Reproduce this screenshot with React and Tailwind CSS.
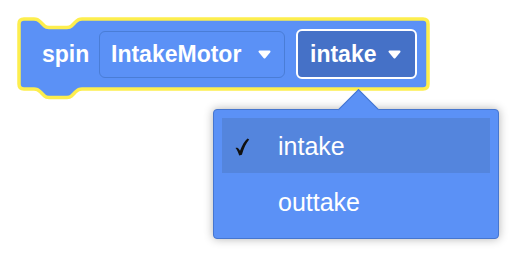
export default function App() {
  const Caret = () => (
    <svg width="13" height="9" viewBox="0 0 13 9" className="shrink-0">
      <path d="M1.5 1.5 H11.5 L6.5 7.5 Z" fill="#ffffff" stroke="#ffffff" strokeWidth="2" strokeLinejoin="round" />
    </svg>
  );
  return (
    <div className="relative w-[516px] h-[258px] bg-white overflow-hidden" style={{ fontFamily: '"Liberation Sans", Arial, sans-serif' }}>
      <div className="pl-[17px] pt-[17px]">
        <div className="relative w-[413px] h-[74px] flex items-center pl-[25px]">
          <svg className="absolute left-0 top-0 overflow-visible" width="413" height="74" viewBox="0 0 413 74">
            <path
              d="M2 7 Q2 2 7 2 H17 C21 2 22 3.5 24 5.5 L27.5 9 C29 10.5 30 10.5 32 10.5 H50 C52 10.5 53 10.5 54.5 9 L58 5.5 C60 3.5 61 2 65 2 H406 Q411 2 411 7 V67 Q411 72 406 72 H65 C61 72 60 73.5 58 75.5 L54.5 79 C53 80.5 52 80.5 50 80.5 H32 C30 80.5 29 80.5 27.5 79 L24 75.5 C22 73.5 21 72 17 72 H7 Q2 72 2 67 Z"
              fill="#5b91f6"
              stroke="#fdee4e"
              strokeWidth="3.5"
              strokeLinejoin="round"
            />
          </svg>
          <span className="relative w-[57px] text-[23px] font-bold text-white leading-none">spin</span>
          <div className="relative w-[186px] h-[47px] rounded-[6px] border border-[#4a7dd6] bg-[#5b91f6] flex items-center pl-[11px] pr-[13px] justify-between">
            <span className="text-[23px] font-bold text-white leading-none">IntakeMotor</span>
            <Caret />
          </div>
          <div className="relative ml-[11px] w-[121px] h-[50px] rounded-[6px] border-2 border-white bg-[#4571c7] flex items-center pl-[12px] pr-[14px] justify-between">
            <span className="text-[23px] font-bold text-white leading-none">intake</span>
            <Caret />
          </div>
        </div>
      </div>

      <div className="absolute left-[213px] top-[109px] w-[286px] h-[130px] rounded-[4px] border border-[#4676cf] bg-[#5b91f6] shadow-[0_0_10px_rgba(0,0,0,0.3)] px-[8px] pt-[8px]">
        <div className="absolute left-[130px] top-[-15px] w-[29px] h-[29px] rotate-45 bg-[#5b91f6] border-l border-t border-[#4676cf]" />
        <div className="relative h-[55px] bg-[#5485dd] flex items-center pt-[2px]">
          <span className="w-[56px] pl-[13px] flex items-center">
            <svg width="15" height="18" viewBox="0 0 15 18">
              <path
                d="M0.5 10 C2 9.3 3.2 10 4.2 11.5 L5 12.8 C7 7.5 9.5 2.8 12.5 0.5 L14.2 1.6 C11.2 5 8.6 10.5 6.9 16.8 L4.2 17.6 C3.4 14.6 2.2 12 0.5 10 Z"
                fill="#111111"
              />
            </svg>
          </span>
          <span className="text-[25px] text-white leading-none">intake</span>
        </div>
        <div className="relative h-[55px] flex items-center pt-[4px]">
          <span className="w-[56px]" />
          <span className="text-[25px] text-white leading-none">outtake</span>
        </div>
      </div>
    </div>
  );
}
